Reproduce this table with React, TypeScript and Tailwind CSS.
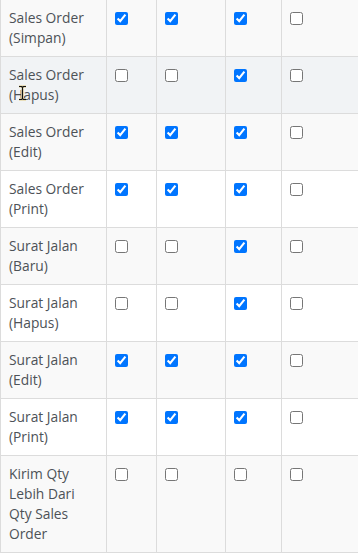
import type { ReactNode } from 'react'

interface PermRow {
  label: ReactNode
  perms: [boolean, boolean, boolean, boolean]
}

const rows: PermRow[] = [
  { label: <>Sales Order<br />(Simpan)</>, perms: [true, true, true, false] },
  { label: <>Sales Order<br />(Hapus)</>, perms: [false, false, true, false] },
  { label: <>Sales Order<br />(Edit)</>, perms: [true, true, true, false] },
  { label: <>Sales Order<br />(Print)</>, perms: [true, true, true, false] },
  { label: <>Surat Jalan<br />(Baru)</>, perms: [false, false, true, false] },
  { label: <>Surat Jalan<br />(Hapus)</>, perms: [false, false, true, false] },
  { label: <>Surat Jalan<br />(Edit)</>, perms: [true, true, true, false] },
  { label: <>Surat Jalan<br />(Print)</>, perms: [true, true, true, false] },
  { label: <>Kirim Qty<br />Lebih Dari<br />Qty Sales<br />Order</>, perms: [false, false, false, false] },
]

// column widths incl. the right border of each cell
const colWidths = ['w-[106px]', 'w-[50px]', 'w-[69px]', 'w-[56px]', 'w-[120px]']

function IBeam() {
  return (
    <svg
      className="absolute left-[18px] top-[85px] pointer-events-none"
      width="9"
      height="16"
      viewBox="0 0 9 16"
    >
      <path
        d="M1 1.5h2.5l1 1 1-1H8M4.5 2.5v11M1 14.5h2.5l1-1 1 1H8"
        fill="none"
        stroke="#e8d9a8"
        strokeWidth="2.6"
      />
      <path
        d="M1 1.5h2.5l1 1 1-1H8M4.5 2.5v11M1 14.5h2.5l1-1 1 1H8"
        fill="none"
        stroke="#111"
        strokeWidth="1.1"
      />
    </svg>
  )
}

export default function App() {
  return (
    <div
      className="relative w-[358px] h-[554px] overflow-hidden bg-white"
      style={{ fontFamily: '"Open Sans", "Noto Sans", sans-serif' }}
    >
      <table className="border-collapse table-fixed w-[401px] text-[13.8px] leading-[20px] text-[#4d5257]">
        <tbody>
          {rows.map((row, i) => {
            const bg = i === 1 ? 'bg-[#f1f3f5]' : i % 2 === 0 ? 'bg-[#f9f9f9]' : 'bg-white'
            const edge = i === 0 ? 'border-t-0' : ''
            return (
              <tr key={i} className={bg}>
                <td className={`${colWidths[0]} ${edge} border border-[#dcdcdc] px-2 py-2 align-top`}>
                  {row.label}
                </td>
                {row.perms.map((on, j) => (
                  <td
                    key={j}
                    className={`${colWidths[j + 1]} ${edge} border border-[#dcdcdc] px-2 py-2 align-top`}
                  >
                    <input
                      type="checkbox"
                      defaultChecked={on}
                      className="block w-[13px] h-[13px] m-0 mt-[4px]"
                    />
                  </td>
                ))}
              </tr>
            )
          })}
        </tbody>
      </table>
      <IBeam />
    </div>
  )
}
